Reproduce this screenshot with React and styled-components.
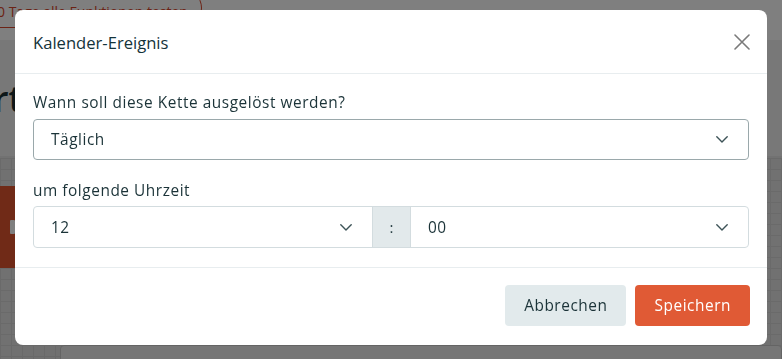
import React from "react";
import styled, { createGlobalStyle } from "styled-components";

const Global = createGlobalStyle`
  html, body { margin: 0; padding: 0; }
  body {
    width: 782px;
    height: 359px;
    overflow: hidden;
    background: #ffffff;
    font-family: "Open Sans", "Noto Sans", sans-serif;
  }
`;

/* ---------- background page ---------- */
const Page = styled.div`
  width: 782px;
  height: 359px;
  display: flex;
  flex-direction: column;
  background: #fff;
  overflow: hidden;
`;

const TopStrip = styled.div`
  height: 40px;
  flex-shrink: 0;
  display: flex;
  align-items: flex-start;
`;

const TrialPill = styled.div`
  margin-left: -34px;
  margin-top: -12px;
  height: 40px;
  padding: 6px 13px 0 22px;
  border: 1.5px solid #d9462b;
  border-radius: 20px;
  display: flex;
  align-items: center;
  box-sizing: border-box;
  color: #d9462b;
  font-size: 14px;
  white-space: nowrap;
`;

const HeadBand = styled.div`
  height: 118px;
  flex-shrink: 0;
  background: #f1f1f1;
  border-bottom: 2px solid #e4e4e4;
  display: flex;
  align-items: center;
  box-sizing: border-box;
`;

const PageTitle = styled.h1`
  margin: 0 0 0 -62px;
  font-size: 36px;
  font-weight: 600;
  color: #1b2f33;
`;

const Canvas = styled.div`
  flex: 1;
  min-height: 0;
  background-color: #e2e2e2;
  background-image:
    linear-gradient(to right, #d4d4d4 1px, transparent 1px),
    linear-gradient(to bottom, #d4d4d4 1px, transparent 1px);
  background-size: 11px 11px;
  padding-top: 28px;
  display: flex;
  flex-direction: column;
  gap: 77px;
`;

const OrangeBtn = styled.div`
  width: 15px;
  height: 82px;
  flex-shrink: 0;
  background: #e0552f;
  display: flex;
  align-items: center;
  justify-content: flex-end;
`;

const BtnGlyph = styled.span`
  width: 5px;
  height: 14px;
  background: #ffffff;
  border-radius: 1px;
`;

const Card = styled.div`
  margin-left: 60px;
  height: 40px;
  flex-shrink: 0;
  border: 1px solid #c9c9c9;
  border-radius: 4px;
  background: #ececec;
`;

/* ---------- modal ---------- */
const Overlay = styled.div`
  position: fixed;
  inset: 0;
  background: rgba(0, 0, 0, 0.5);
  display: flex;
  justify-content: center;
  align-items: flex-start;
  padding-top: 10px;
`;

const Dialog = styled.div`
  width: 752px;
  height: 335px;
  background: #ffffff;
  border-radius: 8px;
  display: flex;
  flex-direction: column;
  color: #1b3338;
`;

const Header = styled.div`
  height: 63px;
  flex-shrink: 0;
  display: flex;
  align-items: center;
  justify-content: space-between;
  padding: 0 17px 0 18px;
  border-bottom: 1px solid #e8edef;
`;

const Title = styled.h2`
  margin: 0;
  font-size: 16.6px;
  font-weight: 500;
  color: #14333a;
  padding-top: 1px;
`;

const CloseBtn = styled.button`
  border: 0;
  background: none;
  padding: 0;
  width: 16px;
  height: 16px;
  display: flex;
  color: #7a7a7a;
  cursor: pointer;
`;

const Body = styled.div`
  padding: 18px 18px 19px;
  display: flex;
  flex-direction: column;
  border-bottom: 1px solid #e8edef;
`;

const textStyle = `
  font-size: 15.4px;
  letter-spacing: 0.55px;
  color: #1b3338;
`;

const Label = styled.div`
  ${textStyle}
  line-height: 22px;
  margin-bottom: ${(p) => p.$mb || 5}px;
  margin-top: ${(p) => p.$mt || 0}px;
`;

const Select = styled.div`
  ${textStyle}
  height: 41px;
  box-sizing: border-box;
  border: 1px solid ${(p) => (p.$focus ? "#9aa8ab" : "#d3dcdf")};
  border-radius: 4px;
  display: flex;
  align-items: center;
  justify-content: space-between;
  padding: 0 20px 0 17px;
`;

const TimeRow = styled.div`
  height: 42px;
  box-sizing: border-box;
  border: 1px solid #d3dcdf;
  border-radius: 4px;
  display: grid;
  grid-template-columns: 338px 39px 1fr;
  overflow: hidden;
`;

const TimeCell = styled.div`
  ${textStyle}
  display: flex;
  align-items: center;
  justify-content: space-between;
  padding: 0 20px 0 17px;
`;

const Colon = styled.div`
  background: #e2e9eb;
  border-left: 1px solid #d3dcdf;
  border-right: 1px solid #d3dcdf;
  display: flex;
  align-items: center;
  justify-content: center;
  font-size: 15px;
  color: #2a4045;
`;

const Footer = styled.div`
  flex: 1;
  display: flex;
  justify-content: flex-end;
  align-items: flex-start;
  gap: 9px;
  padding: 17px 17px 0 0;
`;

const Button = styled.button`
  height: 41px;
  border: 0;
  border-radius: 4px;
  padding: 0 ${(p) => p.$px}px;
  font-family: inherit;
  font-size: 15.4px;
  letter-spacing: 0.55px;
  font-weight: 500;
  cursor: pointer;
  background: ${(p) => (p.$primary ? "#e05a35" : "#e2eaec")};
  color: ${(p) => (p.$primary ? "#ffffff" : "#1b3338")};
`;

const Chevron = () => (
  <svg width="12" height="7" viewBox="0 0 12 7" fill="none">
    <polyline
      points="0.8,0.8 6,6 11.2,0.8"
      stroke="#3d5357"
      strokeWidth="1.4"
      strokeLinecap="round"
      strokeLinejoin="round"
    />
  </svg>
);

const CloseIcon = () => (
  <svg width="16" height="16" viewBox="0 0 16 16" fill="none">
    <path
      d="M1 1 L15 15 M15 1 L1 15"
      stroke="currentColor"
      strokeWidth="1.6"
      strokeLinecap="round"
    />
  </svg>
);

export default function App() {
  return (
    <>
      <Global />
      <Page>
        <TopStrip>
          <TrialPill>30 Tage alle Funktionen testen</TrialPill>
        </TopStrip>
        <HeadBand>
          <PageTitle>Start</PageTitle>
        </HeadBand>
        <Canvas>
          <OrangeBtn>
            <BtnGlyph />
          </OrangeBtn>
          <Card />
        </Canvas>
      </Page>
      <Overlay>
        <Dialog role="dialog">
          <Header>
            <Title>Kalender-Ereignis</Title>
            <CloseBtn aria-label="Schließen">
              <CloseIcon />
            </CloseBtn>
          </Header>
          <Body>
            <Label>Wann soll diese Kette ausgelöst werden?</Label>
            <Select $focus>
              <span>Täglich</span>
              <Chevron />
            </Select>
            <Label $mt={20} $mb={4}>
              um folgende Uhrzeit
            </Label>
            <TimeRow>
              <TimeCell>
                <span>12</span>
                <Chevron />
              </TimeCell>
              <Colon>:</Colon>
              <TimeCell>
                <span>00</span>
                <Chevron />
              </TimeCell>
            </TimeRow>
          </Body>
          <Footer>
            <Button $px={19}>Abbrechen</Button>
            <Button $primary $px={19}>
              Speichern
            </Button>
          </Footer>
        </Dialog>
      </Overlay>
    </>
  );
}
